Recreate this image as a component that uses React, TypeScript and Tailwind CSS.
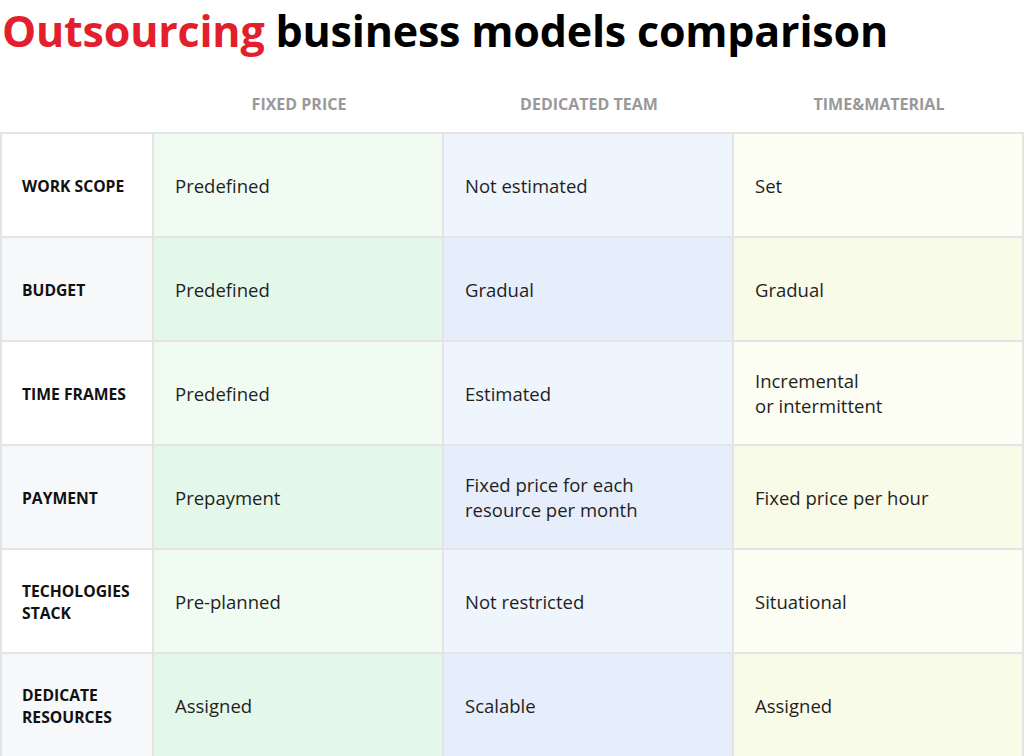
const columns = ["FIXED PRICE", "DEDICATED TEAM", "TIME&MATERIAL"];

const rows: { label: string[]; cells: string[][] }[] = [
  { label: ["WORK SCOPE"], cells: [["Predefined"], ["Not estimated"], ["Set"]] },
  { label: ["BUDGET"], cells: [["Predefined"], ["Gradual"], ["Gradual"]] },
  { label: ["TIME FRAMES"], cells: [["Predefined"], ["Estimated"], ["Incremental", "or intermittent"]] },
  { label: ["PAYMENT"], cells: [["Prepayment"], ["Fixed price for each", "resource per month"], ["Fixed price per hour"]] },
  { label: ["TECHOLOGIES", "STACK"], cells: [["Pre-planned"], ["Not restricted"], ["Situational"]] },
  { label: ["DEDICATE", "RESOURCES"], cells: [["Assigned"], ["Scalable"], ["Assigned"]] },
];

// odd / even row backgrounds per column
const labelBg = ["bg-white", "bg-[#f7f8fa]"];
const cellBg = [
  ["bg-[#f0fbf2]", "bg-[#e4f8e9]"],
  ["bg-[#eff5fd]", "bg-[#e6eefb]"],
  ["bg-[#fcfdf3]", "bg-[#f8fbe8]"],
];

export default function App() {
  return (
    <div className="w-[1024px] h-[756px] overflow-hidden bg-white font-['Open_Sans',sans-serif] text-[#1f1f1f]">
      {/* TITLE */}
      <h1 className="pl-[2px] pt-[3px] text-[43px] font-bold leading-[56px] text-black tracking-[-0.2px]">
        <span className="text-[#e31e2d]">Outsourcing</span> business models comparison
      </h1>

      {/* COLUMN HEADERS */}
      <div className="mt-[21px] grid h-[52px] grid-cols-[154px_290px_290px_290px] items-start">
        <div />
        {columns.map((c) => (
          <div key={c} className="pt-[13px] text-center text-[16px] font-bold leading-[22px] text-[#999999]">
            {c}
          </div>
        ))}
      </div>

      {/* TABLE */}
      <div className="grid grid-cols-[152px_290px_290px_290px] border-t-2 border-l-2 border-[#e4e4e4]">
        {rows.map((r, i) => (
          <div key={i} className="contents">
            <div
              className={`flex h-[104px] flex-col justify-center border-r-2 border-b-2 border-[#e4e4e4] pl-[20px] pt-[2px] text-[15.7px] font-bold leading-[22px] text-[#111] ${labelBg[i % 2]}`}
            >
              {r.label.map((l) => (
                <span key={l}>{l}</span>
              ))}
            </div>
            {r.cells.map((cell, j) => (
              <div
                key={j}
                className={`flex h-[104px] flex-col justify-center border-r-2 border-b-2 border-[#e4e4e4] pl-[21px] text-[18.5px] leading-[25px] ${cellBg[j][i % 2]}`}
              >
                {cell.map((t) => (
                  <span key={t}>{t}</span>
                ))}
              </div>
            ))}
          </div>
        ))}
      </div>
    </div>
  );
}
